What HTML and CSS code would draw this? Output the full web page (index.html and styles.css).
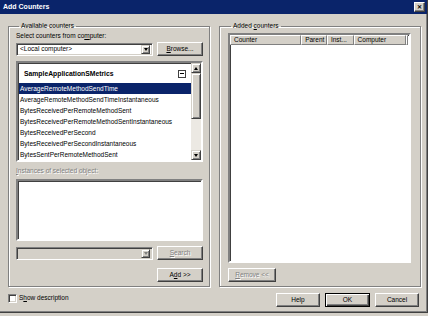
FILE: index.html
```html
<!DOCTYPE html>
<html>
<head>
<meta charset="utf-8">
<link rel="stylesheet" href="styles.css">
</head>
<body>
<div class="window">
  <div class="titlebar">
    <span class="title">Add Counters</span>
    <span class="close">&#x2715;</span>
  </div>
  <div class="groups">
    <fieldset class="group group-left">
      <legend>Available counters</legend>
      <div class="label">Select counters from co<u>m</u>puter:</div>
      <div class="row">
        <div class="combo">
          <span class="combo-text">&lt;Local computer&gt;</span>
          <span class="drop"><span class="tri"></span></span>
        </div>
        <div class="btn"><span><u>B</u>rowse...</span></div>
      </div>
      <div class="listbox">
        <div class="list-content">
          <div class="list-head">
            <span class="head-text">SampleApplicationSMetrics</span>
            <span class="collapse"><span class="minus"></span></span>
          </div>
          <div class="item selected">AverageRemoteMethodSendTime</div>
          <div class="item">AverageRemoteMethodSendTimeInstantaneous</div>
          <div class="item">BytesReceivedPerRemoteMethodSent</div>
          <div class="item">BytesReceivedPerRemoteMethodSentInstantaneous</div>
          <div class="item">BytesReceivedPerSecond</div>
          <div class="item">BytesReceivedPerSecondInstantaneous</div>
          <div class="item">BytesSentPerRemoteMethodSent</div>
        </div>
        <div class="vscroll">
          <span class="sb-btn"><span class="tri up"></span></span>
          <span class="sb-thumb"></span>
          <span class="sb-track"></span>
          <span class="sb-btn"><span class="tri"></span></span>
        </div>
      </div>
      <div class="label label-inst disabled"><u>I</u>nstances of selected object:</div>
      <div class="instances"></div>
      <div class="row row-search">
        <div class="combo combo-disabled">
          <span class="combo-text"></span>
          <span class="drop"><span class="tri tri-disabled"></span></span>
        </div>
        <div class="btn btn-disabled"><span><u>S</u>earch</span></div>
      </div>
      <div class="row row-end">
        <div class="btn"><span>A<u>d</u>d &gt;&gt;</span></div>
      </div>
    </fieldset>
    <fieldset class="group group-right">
      <legend>Added <u>c</u>ounters</legend>
      <div class="listview">
        <div class="lv-head">
          <span class="col col-counter">Counter</span>
          <span class="col col-parent">Parent</span>
          <span class="col col-inst">Inst...</span>
          <span class="col col-computer">Computer</span>
          <span class="col col-rest"></span>
        </div>
      </div>
      <div class="row">
        <div class="btn btn-disabled btn-remove"><span><u>R</u>emove &lt;&lt;</span></div>
      </div>
    </fieldset>
  </div>
  <div class="footer">
    <div class="check">
      <span class="checkbox"></span>
      <span>S<u>h</u>ow description</span>
    </div>
    <div class="buttons">
      <div class="btn btn-dlg"><span>Help</span></div>
      <div class="btn btn-dlg btn-default"><span>OK</span></div>
      <div class="btn btn-dlg"><span>Cancel</span></div>
    </div>
  </div>
</div>
</body>
</html>
```

FILE: styles.css
```css
* { box-sizing: border-box; }
html, body { margin: 0; padding: 0; }
body {
  width: 428px;
  height: 316px;
  overflow: hidden;
  background: #d4d0c8;
  font-family: "Liberation Sans", Arial, sans-serif;
  font-size: 6.5px;
  line-height: 8px;
  color: #000;
}
u { text-decoration: underline; text-underline-offset: 1px; }

.window {
  width: 428px;
  height: 313px;
  background: #d4d0c8;
  border-right: 1px solid #404040;
  border-bottom: 1px solid #404040;
  box-shadow: inset -1px -1px 0 #808080;
  display: flex;
  flex-direction: column;
}

/* title bar */
.titlebar {
  height: 14px;
  background: #0a246a;
  display: flex;
  align-items: center;
  justify-content: space-between;
  padding: 0 2px 0 3px;
}
.title {
  color: #fff;
  font-weight: bold;
  font-size: 7px;
}
.close {
  width: 11px;
  height: 10px;
  background: #d4d0c8;
  border: 1px solid;
  border-color: #fff #404040 #404040 #fff;
  box-shadow: inset -1px -1px 0 #808080;
  font-size: 6px;
  font-weight: bold;
  line-height: 8px;
  text-align: center;
  color: #000;
}

/* groups */
.groups {
  display: grid;
  grid-template-columns: 202px 202px;
  column-gap: 9px;
  padding: 8px 0 0 8px;
}
.group {
  margin: 0;
  border: 1px solid #808080;
  box-shadow: inset 1px 1px 0 #fff, 1px 1px 0 #fff;
  min-width: 0;
}
.group legend {
  padding: 0 2px;
  margin-left: 3px;
  line-height: 8px;
}
.group-left {
  padding: 2px 6px 4px 7px;
  display: flex;
  flex-direction: column;
}
.group-right {
  padding: 3px 9px 4px 8px;
  display: flex;
  flex-direction: column;
}

.label { height: 8px; white-space: nowrap; }
.label-inst { margin-top: 5px; }
.disabled { color: #808080; text-shadow: 1px 1px 0 #fff; }

.row {
  display: flex;
  align-items: center;
  justify-content: space-between;
  height: 14px;
  margin-top: 2px;
}
.row-search { margin-top: 5px; }
.row-end { justify-content: flex-end; margin-top: 8px; }

/* combo */
.combo {
  width: 137px;
  height: 13px;
  background: #fff;
  border: 1px solid;
  border-color: #808080 #fff #fff #808080;
  box-shadow: inset 1px 1px 0 #404040, inset -1px -1px 0 #d4d0c8;
  display: flex;
  align-items: center;
  padding: 0 2px 0 3px;
}
.combo-disabled { background: #d4d0c8; }
.combo-text { flex: 1; white-space: nowrap; }
.drop {
  width: 9px;
  height: 9px;
  background: #d4d0c8;
  border: 1px solid;
  border-color: #d4d0c8 #404040 #404040 #d4d0c8;
  box-shadow: inset 1px 1px 0 #fff, inset -1px -1px 0 #808080;
  display: flex;
  align-items: center;
  justify-content: center;
}
.tri {
  width: 0;
  height: 0;
  border-left: 2.5px solid transparent;
  border-right: 2.5px solid transparent;
  border-top: 3px solid #000;
}
.tri.up { border-top: 0; border-bottom: 3px solid #000; }
.tri-disabled { border-top-color: #808080; }

/* buttons */
.btn {
  width: 46px;
  height: 14px;
  background: #d4d0c8;
  border: 1px solid;
  border-color: #fff #404040 #404040 #fff;
  box-shadow: inset -1px -1px 0 #808080;
  display: flex;
  align-items: center;
  justify-content: center;
  white-space: nowrap;
}
.btn-disabled { color: #808080; text-shadow: 1px 1px 0 #fff; }
.btn-remove { width: 48px; }
.btn-dlg { width: 44px; }
.btn-default {
  border: 1px solid #000;
  box-shadow: inset 1px 1px 0 #fff, inset -1px -1px 0 #404040, inset -2px -2px 0 #808080;
  width: 45px;
}

/* list box */
.listbox {
  margin-top: 5px;
  height: 101px;
  background: #fff;
  border: 2px solid;
  border-color: #808080 #fff #fff #808080;
  box-shadow: inset 1px 1px 0 #404040;
  display: flex;
}
.list-content {
  flex: 1;
  min-width: 0;
  padding-left: 1px;
}
.list-head {
  height: 20px;
  display: flex;
  align-items: center;
  justify-content: space-between;
  padding: 1px 5px 0 5px;
}
.head-text { font-weight: bold; font-size: 6.8px; }
.collapse {
  width: 8px;
  height: 8px;
  border: 1px solid #404040;
  display: flex;
  align-items: center;
  justify-content: center;
}
.minus { width: 4px; height: 1px; background: #000; }
.item {
  height: 11px;
  line-height: 11px;
  padding-left: 1px;
  white-space: nowrap;
  overflow: hidden;
}
.item.selected { background: #0a246a; color: #fff; }

.vscroll {
  width: 10px;
  display: flex;
  flex-direction: column;
}
.sb-btn, .sb-thumb {
  background: #d4d0c8;
  border: 1px solid;
  border-color: #d4d0c8 #404040 #404040 #d4d0c8;
  box-shadow: inset 1px 1px 0 #fff, inset -1px -1px 0 #808080;
}
.sb-btn {
  height: 10px;
  display: flex;
  align-items: center;
  justify-content: center;
}
.sb-thumb { height: 46px; }
.sb-track { flex: 1; background: #ece9e3; }

.instances {
  margin-top: 4px;
  height: 62px;
  background: #fff;
  border: 2px solid;
  border-color: #808080 #fff #fff #808080;
  box-shadow: inset 1px 1px 0 #404040;
}

/* list view */
.listview {
  flex: 1;
  background: #fff;
  border: 2px solid;
  border-color: #808080 #fff #fff #808080;
  box-shadow: inset 1px 1px 0 #404040;
  padding: 0 1px 0 0;
}
.lv-head { display: flex; height: 10px; }
.col {
  height: 10px;
  background: #d4d0c8;
  border: 1px solid;
  border-color: #fff #808080 #808080 #fff;
  line-height: 8px;
  padding-left: 3px;
  white-space: nowrap;
  overflow: hidden;
}
.col-counter { width: 72px; }
.col-parent { width: 26px; }
.col-inst { width: 27px; }
.col-computer { width: 53px; }
.col-rest { flex: 1; padding: 0; }
.group-right .row { margin-top: 5px; }

/* footer */
.footer {
  display: flex;
  justify-content: space-between;
  align-items: flex-start;
  padding: 6px 8px 0 8px;
}
.check {
  display: flex;
  align-items: center;
  gap: 2px;
  height: 10px;
}
.checkbox {
  width: 9px;
  height: 9px;
  background: #fff;
  border: 1px solid;
  border-color: #808080 #fff #fff #808080;
  box-shadow: inset 1px 1px 0 #404040, inset -1px -1px 0 #d4d0c8;
}
.buttons { display: flex; gap: 5px; }
```
